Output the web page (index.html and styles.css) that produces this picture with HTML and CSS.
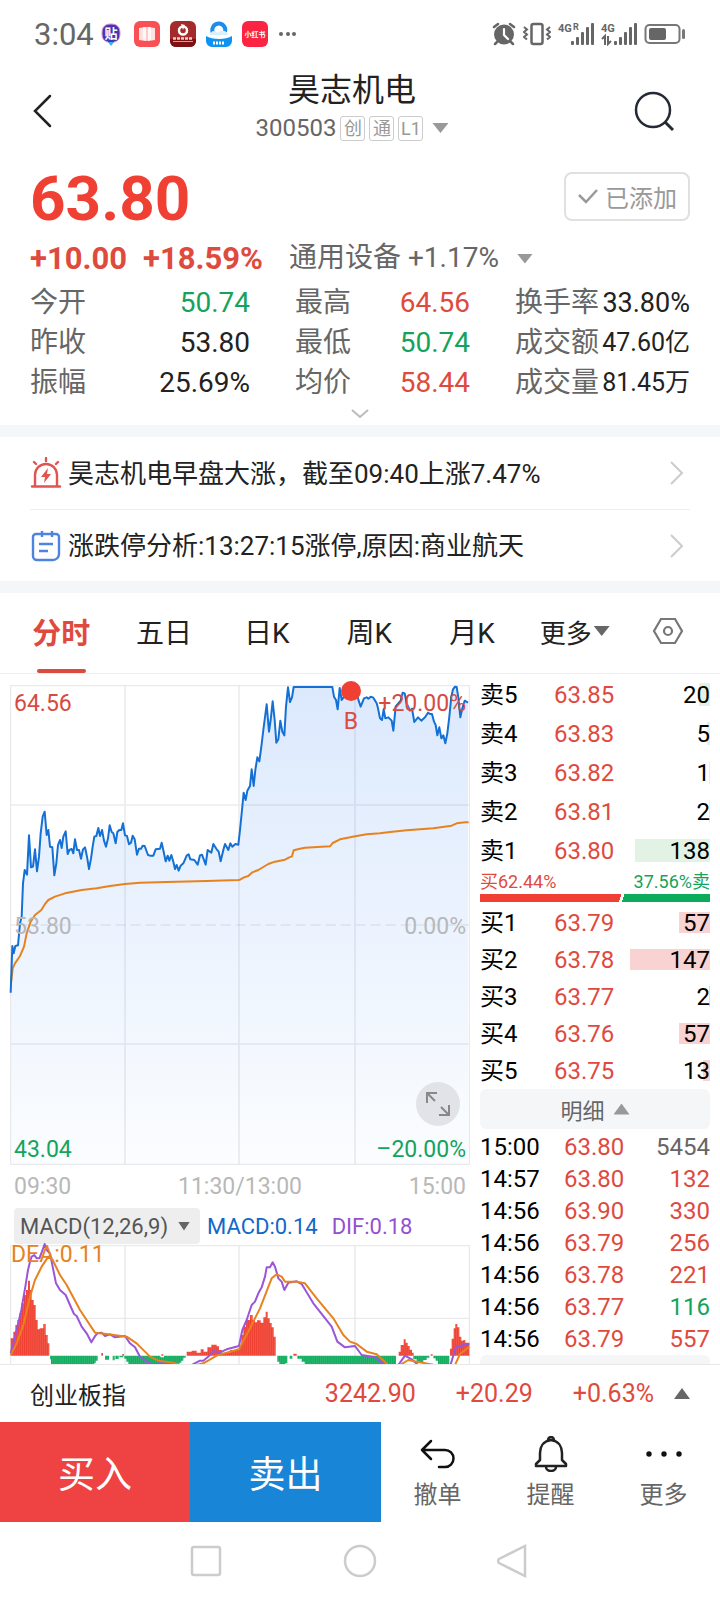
FILE: index.html
```html
<!DOCTYPE html>
<html lang="zh-CN">
<head>
    <meta charset="UTF-8">
    <meta name="viewport" content="width=device-width, initial-scale=1.0">
    <title>昊志机电 300503</title>
    <link rel="stylesheet" href="styles.css">
</head>
<body>
    <div class="status-bar">
        <span class="clock">3:04</span>
        <div class="app-icons">
            <svg width="26" height="26" viewBox="0 0 26 26">
                <path d="M13 3c6 0 9 3 9 9s-2 8-6 9l-3 3-3-3c-4-1-6-3-6-9s3-9 9-9z" fill="#4338b0" stroke="#e58bc8" stroke-width="1"/>
                <path d="M10 21l3 4 3-4z" fill="#35b5f5"/>
                <text x="13" y="17" class="icon-text" font-size="13">贴</text>
            </svg>
            <svg width="26" height="26" viewBox="0 0 26 26">
                <rect width="26" height="26" rx="6" fill="#f94f55"/>
                <path d="M5 7l7-1v14l-7-1zM14 6l7 1v12l-7 1z" fill="#fde3df"/>
                <path d="M9 6h8v13l-4 1-4-1z" fill="#fff" opacity=".7"/>
            </svg>
            <svg width="26" height="26" viewBox="0 0 26 26">
                <rect width="26" height="26" rx="6" fill="#a52a2a"/>
                <path d="M0 18h26v2a6 6 0 0 1-6 6H6a6 6 0 0 1-6-6z" fill="#7c1013"/>
                <circle cx="13" cy="9.500" r="4" fill="none" stroke="#fff" stroke-width="2.500"/>
                <path d="M11 3l4 1-2 5z" fill="#fff"/>
                <path d="M3 17.500h20" stroke="#f1caca" stroke-width="2.500" stroke-dasharray="3 1"/>
                <path d="M3 20.500h20" stroke="#d79a9a"/>
            </svg>
            <svg width="26" height="26" viewBox="0 0 26 26">
                <path d="M7 12a6.500 6.500 0 1 1 12-1" fill="none" stroke="#1c8cf0" stroke-width="4"/>
                <path d="M4 14c1-5 5-5 8-2 3-4 10-2 10 2z" fill="#d9effc"/>
                <path d="M0 15c6 4 20 4 26 0v5a6 6 0 0 1-6 6H6a6 6 0 0 1-6-6z" fill="#1093f0"/>
                <path d="M7 22h12" stroke="#fff" stroke-width="3" stroke-dasharray="2 1"/>
            </svg>
            <svg width="26" height="26" viewBox="0 0 26 26">
                <rect width="26" height="26" rx="6" fill="#fc2442"/>
                <text x="13" y="16" class="icon-text" font-size="7">小红书</text>
            </svg>
            <svg width="20" height="26" viewBox="0 0 20 26" fill="#666">
                <circle cx="3" cy="13" r="2"/><circle cx="10" cy="13" r="2"/><circle cx="16" cy="13" r="2"/>
            </svg>
        </div>
        <div class="system-icons">
            <svg width="24" height="24" viewBox="0 0 24 24">
                <circle cx="12" cy="12.500" r="10" fill="#666"/>
                <path d="M2 5l4-3M22 5l-4-3M5 20l-2 2M19 20l2 2" stroke="#666" stroke-width="2.500" stroke-linecap="round"/>
                <path d="M12 7v6l4 4" fill="none" stroke="#fff" stroke-width="2.200" stroke-linecap="round"/>
            </svg>
            <svg width="28" height="24" viewBox="0 0 28 24" fill="none" stroke="#666">
                <rect x="8.500" y="2" width="11" height="20" rx="2" stroke-width="2.500"/>
                <path d="M1 5l3 2.500-3 2.500 3 2.500-3 2.500 3 2.500M27 5l-3 2.500 3 2.500-3 2.500 3 2.500-3 2.500" stroke-width="2"/>
            </svg>
            <svg width="36" height="24" viewBox="0 0 36 24" fill="#666">
                <text x="0" y="10" class="net-text">4G</text><text x="15" y="8" class="net-text net-r">R</text>
                <rect x="13" y="19" width="3" height="4" rx="1"/><rect x="18" y="15" width="3" height="8" rx="1"/>
                <rect x="23" y="10" width="3" height="13" rx="1"/><rect x="28" y="5" width="3" height="18" rx="1"/>
                <rect x="33" y="1" width="3" height="22" rx="1"/>
            </svg>
            <svg width="36" height="24" viewBox="0 0 36 24" fill="#666">
                <text x="0" y="10" class="net-text">4G</text>
                <path d="M1 17l3-3v9M7 14v8l3-3" fill="none" stroke="#666" stroke-width="2"/>
                <rect x="13" y="19" width="3" height="4" rx="1"/><rect x="18" y="15" width="3" height="8" rx="1"/>
                <rect x="23" y="10" width="3" height="13" rx="1"/><rect x="28" y="5" width="3" height="18" rx="1"/>
                <rect x="33" y="1" width="3" height="22" rx="1"/>
            </svg>
            <svg width="42" height="24" viewBox="0 0 42 24">
                <rect x="1.500" y="3" width="34" height="18" rx="4" fill="none" stroke="#777" stroke-width="2"/>
                <rect x="5" y="6" width="17" height="12" rx="2" fill="#666"/>
                <rect x="38" y="7" width="3" height="10" rx="1.500" fill="#777"/>
            </svg>
        </div>
    </div>

    <header class="title-bar">
        <button class="icon-btn back" aria-label="返回">
            <svg width="22" height="34" viewBox="0 0 22 34"><path d="M20 2L5 17l15 15" fill="none" stroke="#222" stroke-width="2.500" stroke-linecap="round"/></svg>
        </button>
        <div class="stock-title">
            <h1>昊志机电</h1>
            <div class="stock-code">
                <span>300503</span>
                <span class="tag">创</span>
                <span class="tag">通</span>
                <span class="tag">L1</span>
                <i class="tri-down"></i>
            </div>
        </div>
        <button class="icon-btn search" aria-label="搜索">
            <svg width="42" height="42" viewBox="0 0 42 42" fill="none" stroke="#252a35" stroke-width="2.500"><circle cx="19" cy="20" r="17"/><path d="M31 32l8 8" stroke-width="3"/></svg>
        </button>
    </header>

    <section class="quote">
        <div class="price-row">
            <strong class="price">63.80</strong>
            <button class="added">
                <svg width="22" height="18" viewBox="0 0 22 18"><path d="M2 8l7 7L20 3" fill="none" stroke="#999" stroke-width="2.500"/></svg>
                已添加
            </button>
        </div>
        <div class="change-row">
            <strong>+10.00</strong>
            <strong>+18.59%</strong>
            <span class="sector">通用设备 +1.17%</span>
            <i class="tri-down"></i>
        </div>
        <div class="stats">
            <dl>
                <div><dt>今开</dt><dd class="green">50.74</dd></div>
                <div><dt>昨收</dt><dd>53.80</dd></div>
                <div><dt>振幅</dt><dd>25.69%</dd></div>
            </dl>
            <dl>
                <div><dt>最高</dt><dd class="red">64.56</dd></div>
                <div><dt>最低</dt><dd class="green">50.74</dd></div>
                <div><dt>均价</dt><dd class="red">58.44</dd></div>
            </dl>
            <dl>
                <div><dt>换手率</dt><dd class="wide">33.80%</dd></div>
                <div><dt>成交额</dt><dd class="amount">47.60亿</dd></div>
                <div><dt>成交量</dt><dd class="amount">81.45万</dd></div>
            </dl>
        </div>
        <button class="icon-btn expand" aria-label="展开">
            <svg width="20" height="10" viewBox="0 0 20 10"><path d="M2 1l8 7 8-7" fill="none" stroke="#bbb" stroke-width="2"/></svg>
        </button>
    </section>

    <section class="alerts">
        <a href="#">
            <svg width="32" height="32" viewBox="0 0 32 32" fill="none" stroke="#e2544f" stroke-width="2.400" stroke-linecap="round">
                <path d="M2 29.500h28M5 29V18a11 11 0 0 1 22 0v11M16 1v3M4 5l2 2M28 5l-2 2"/>
                <path d="M18 11l-7 9h4l-1 6 7-9h-4z" fill="#e2544f" stroke="none"/>
            </svg>
            <span>昊志机电早盘大涨，截至09:40上涨7.47%</span>
            <svg class="arrow" width="14" height="26" viewBox="0 0 14 26"><path d="M1 2l11 11L1 24" fill="none" stroke="#ccc" stroke-width="2"/></svg>
        </a>
        <a href="#">
            <svg width="32" height="32" viewBox="0 0 32 32" fill="none" stroke="#4f83e0" stroke-width="2.400">
                <path d="M6 4h20a3 3 0 0 1 3 3v17a6 6 0 0 1-6 6H7a4 4 0 0 1-4-4V7a3 3 0 0 1 3-3zM12 1v6M22 1v6M9 14h14M9 21h9"/>
            </svg>
            <span>涨跌停分析:13:27:15涨停,原因:商业航天</span>
            <svg class="arrow" width="14" height="26" viewBox="0 0 14 26"><path d="M1 2l11 11L1 24" fill="none" stroke="#ccc" stroke-width="2"/></svg>
        </a>
    </section>

    <nav class="tabs">
        <button class="active">分时</button>
        <button>五日</button>
        <button>日K</button>
        <button>周K</button>
        <button>月K</button>
        <button class="more">更多<i class="tri-down dark"></i></button>
        <button class="settings" aria-label="设置">
            <svg width="32" height="28" viewBox="0 0 32 28" fill="none" stroke="#777" stroke-width="2.200"><path d="M9 2h14l7 12-7 12H9L2 14z"/><circle cx="16" cy="14" r="4"/></svg>
        </button>
    </nav>

    <main class="market">
        <div class="charts">
            <div class="time-chart">
                <svg viewBox="30 45 1380 1440" preserveAspectRatio="none">
                    <defs>
                        <linearGradient id="area" x1="0" y1="0" x2="0" y2="1">
                            <stop offset="0" stop-color="#dce9fd"/>
                            <stop offset="1" stop-color="#fbfdff"/>
                        </linearGradient>
                    </defs>
                    <path fill="url(#area)" d="M32 968L37 828 41 850 46 828 54 826 60 760 65 740 69 640 74 600 81 614 87 496 93 592 99 590 105 538 111 604 117 560 122 490 128 440 134 425 140 495 145 480 150 530 157 532 163 616 169 580 174 525 180 510 185 534 190 500 197 484 203 552 208 540 215 537 220 550 225 508 231 540 237 540 243 566 249 538 255 532 261 560 267 597 273 566 278 530 283 500 289 498 295 474 300 498 306 480 312 512 318 530 324 505 329 466 335 486 340 490 347 520 352 486 358 480 364 480 369 460 375 496 381 498 387 523 393 518 398 497 404 508 411 554 417 536 423 536 428 527 434 528 444 555 450 557 460 557 467 538 480 536 485 518 491 545 497 574 503 557 508 572 514 555 520 575 525 597 530 585 536 602 542 587 550 580 560 557 566 553 571 568 583 570 593 584 600 556 606 554 617 584 623 540 634 548 640 522 650 538 656 545 662 574 670 540 675 522 685 540 691 520 697 530 706 522 715 524 720 480 726 420 731 368 737 390 742 362 750 348 755 298 761 348 766 300 772 262 778 274 784 230 790 180 800 103 807 185 812 150 818 94 824 150 829 218 835 208 841 152 847 185 853 196 858 110 864 52 870 96 876 82 881 51 997 51 1002 80 1008 90 1013 118 1019 54 1025 90 1031 82 1035 60 1070 70 1076 92 1082 110 1092 85 1100 82 1105 86 1112 80 1120 83 1130 100 1134 115 1140 145 1146 150 1151 118 1156 145 1165 142 1175 152 1180 182 1187 110 1195 100 1202 92 1208 68 1214 70 1220 100 1230 122 1236 116 1243 156 1254 142 1264 152 1275 142 1284 128 1290 132 1296 132 1302 155 1307 165 1312 196 1318 172 1324 205 1330 196 1336 220 1342 190 1348 140 1354 80 1359 58 1365 50 1370 51 1376 90 1381 142 1387 115 1394 92 1404 98V1483H32z"/>
                    <g class="grid">
                        <path d="M375 46V1483M717 46V1483M1065 46V1483M32 405H1408M32 1122H1408"/>
                        <path class="zero" d="M32 765H1408"/>
                        <path class="frame" d="M32 47H1408V1483H32z"/>
                    </g>
                    <polyline class="avg" points="33,940 38,895 45,880 60,858 72,830 80,790 92,755 105,735 124,720 135,702 145,690 165,680 195,670 245,660 290,655 330,648 375,642 420,638 500,636 620,633 715,630 720,629 732,622 745,618 757,607 775,600 790,591 805,582 825,575 855,569 868,562 876,559 881,541 900,536 915,533 990,529 998,519 1020,508 1070,498 1100,493 1140,490 1170,486 1220,481 1300,475 1355,467 1370,460 1395,457 1406,457"/>
                    <polyline class="last" points="32,968 37,828 41,850 46,828 54,826 60,760 65,740 69,640 74,600 81,614 87,496 93,592 99,590 105,538 111,604 117,560 122,490 128,440 134,425 140,495 145,480 150,530 157,532 163,616 169,580 174,525 180,510 185,534 190,500 197,484 203,552 208,540 215,537 220,550 225,508 231,540 237,540 243,566 249,538 255,532 261,560 267,597 273,566 278,530 283,500 289,498 295,474 300,498 306,480 312,512 318,530 324,505 329,466 335,486 340,490 347,520 352,486 358,480 364,480 369,460 375,496 381,498 387,523 393,518 398,497 404,508 411,554 417,536 423,536 428,527 434,528 444,555 450,557 460,557 467,538 480,536 485,518 491,545 497,574 503,557 508,572 514,555 520,575 525,597 530,585 536,602 542,587 550,580 560,557 566,553 571,568 583,570 593,584 600,556 606,554 617,584 623,540 634,548 640,522 650,538 656,545 662,574 670,540 675,522 685,540 691,520 697,530 706,522 715,524 720,480 726,420 731,368 737,390 742,362 750,348 755,298 761,348 766,300 772,262 778,274 784,230 790,180 800,103 807,185 812,150 818,94 824,150 829,218 835,208 841,152 847,185 853,196 858,110 864,52 870,96 876,82 881,51 997,51 1002,80 1008,90 1013,118 1019,54 1025,90 1031,82 1035,60 1070,70 1076,92 1082,110 1092,85 1100,82 1105,86 1112,80 1120,83 1130,100 1134,115 1140,145 1146,150 1151,118 1156,145 1165,142 1175,152 1180,182 1187,110 1195,100 1202,92 1208,68 1214,70 1220,100 1230,122 1236,116 1243,156 1254,142 1264,152 1275,142 1284,128 1290,132 1296,132 1302,155 1307,165 1312,196 1318,172 1324,205 1330,196 1336,220 1342,190 1348,140 1354,80 1359,58 1365,50 1370,51 1376,90 1381,142 1387,115 1394,92 1404,98"/>
                </svg>
                <span class="mark top left red">64.56</span>
                <span class="mark top right red">+20.00%</span>
                <span class="mark mid left">53.80</span>
                <span class="mark mid right">0.00%</span>
                <span class="mark bottom left green">43.04</span>
                <span class="mark bottom right green">–20.00%</span>
                <span class="trade-point"><i></i>B</span>
                <button class="fullscreen" aria-label="全屏">
                    <svg width="26" height="26" viewBox="0 0 26 26" fill="none" stroke="#888" stroke-width="2"><path d="M2 12V2h10M2 2l8 8M24 14v10H14M24 24l-8-8"/></svg>
                </button>
            </div>
            <div class="time-axis"><span>09:30</span><span>11:30/13:00</span><span>15:00</span></div>
            <div class="indicator-row">
                <span class="indicator">
                    <select aria-label="指标"><option>MACD(12,26,9)</option></select>
                    <i class="tri-down dark small"></i>
                </span>
                <span class="blue">MACD:0.14</span>
                <span class="purple">DIF:0.18</span>
            </div>
            <div class="macd-chart">
                <svg viewBox="30 465 1380 360" preserveAspectRatio="none">
                    <defs>
                        <pattern id="rise" width="5.750" height="10" patternUnits="userSpaceOnUse"><rect width="6" height="10" fill="#ef3f30"/><rect width="1.200" height="10" fill="#f67a6c"/></pattern>
                        <pattern id="fall" width="5.750" height="10" patternUnits="userSpaceOnUse"><rect width="6" height="10" fill="#0cab5c"/><rect width="1.200" height="10" fill="#5cc894"/></pattern>
                    </defs>
                    <g class="grid">
                        <path d="M375 467V825M717 467V825M1065 467V825"/>
                        <path class="frame" d="M32 825V467H1408V825M32 685H1408"/>
                    </g>
                    <path fill="url(#rise)" d="M32 797V745H40V725H46V705H52V690H58V670H64V640H72V615H78V600H84V572H90V600H95V630H101V645H107V690H113V718H119V715H130V702H137V735H143V760H148V797z
                        M304 797v-8h5v8zM367 797v-5h5v5zM484 797v-4h6v4z
                        M560 797V785H575V782H590V788H602V778H611V785H622V772H634V764H650V769H657V780H665V788H690V780H717V765H724V735H730V710H738V690H750V675H758V690H765V697H771V691H782V698H790V682H797V665H803V685H809V699H815V712H821V740H827V797z
                        M880 797v-6h10v6zM1196 797V785H1202V765H1211V748H1217V758H1223V768H1229V779H1236V788H1241V797zM1292 797v-4h6v4z
                        M1350 797V776H1355V746H1361V715H1366V702H1372V712H1378V740H1384V752H1390V750H1396V758H1408V797z"/>
                    <path fill="url(#fall)" d="M150 797H293V812H287V820H282V825H153V808H150z
                        M315 797h12v12h-12zM338 797h6v14h-6zM346 797h10v10h-10zM358 797h12v5h-12z
                        M373 797H481V802H492V797H557V803H550V812H544V818H538V825H385V815H379V806H373z
                        M832 797H862V820H856V825H838V815H832zM869 797h8v9h-8zM892 797H1188V825H914V815H905V806H892z
                        M1240 797H1288V803H1280V810H1270V818H1250V808H1240zM1300 797H1348V823H1314V812H1307V805H1300z"/>
                    <polyline class="dif" points="32,790 50,720 64,660 76,590 84,540 90,515 95,500 103,495 110,505 118,505 126,485 134,462 140,480 150,490 158,530 168,580 180,600 197,615 210,645 222,672 230,678 245,710 260,730 274,757 284,740 292,730 305,728 315,738 330,733 345,742 375,738 390,760 405,772 420,800 440,815 462,825 480,819 500,821 540,832 575,825 600,812 610,812 628,797 640,783 660,787 680,778 717,768 727,720 740,690 755,645 765,635 775,610 785,592 795,560 800,532 810,532 818,517 825,530 835,565 845,575 853,600 865,578 890,574 905,582 940,640 995,710 1012,755 1035,772 1065,768 1085,795 1125,802 1160,830 1195,825 1215,797 1235,808 1260,830 1350,830 1362,790 1370,768 1380,770 1390,765 1408,762"/>
                    <polyline class="dea" points="32,795 50,760 70,705 90,620 105,570 125,530 145,500 158,510 180,555 200,585 240,660 285,728 320,732 380,740 410,760 450,800 475,812 520,818 560,832 610,820 650,797 690,785 717,778 750,715 780,655 815,565 830,553 845,560 855,575 890,575 915,580 950,625 1000,685 1030,735 1050,755 1070,762 1100,785 1130,793 1170,830 1200,825 1225,810 1250,815 1300,824 1365,825 1380,792 1408,770"/>
                </svg>
                <span class="dea-label">DEA:0.11</span>
            </div>
        </div>

        <div class="order-book">
            <table class="sell">
                <tr><td>卖5</td><td>63.85</td><td style="--w: 11px">20</td></tr>
                <tr><td>卖4</td><td>63.83</td><td style="--w: 3px">5</td></tr>
                <tr><td>卖3</td><td>63.82</td><td style="--w: 1px">1</td></tr>
                <tr><td>卖2</td><td>63.81</td><td style="--w: 1px">2</td></tr>
                <tr><td>卖1</td><td>63.80</td><td style="--w: 75px">138</td></tr>
            </table>
            <div class="ratio-text"><span class="red">买62.44%</span><span class="green">37.56%卖</span></div>
            <div class="ratio-bar"><i style="width: 62.44%"></i></div>
            <table class="buy">
                <tr><td>买1</td><td>63.79</td><td style="--w: 31px">57</td></tr>
                <tr><td>买2</td><td>63.78</td><td style="--w: 80px">147</td></tr>
                <tr><td>买3</td><td>63.77</td><td style="--w: 1px">2</td></tr>
                <tr><td>买4</td><td>63.76</td><td style="--w: 31px">57</td></tr>
                <tr><td>买5</td><td>63.75</td><td style="--w: 7px">13</td></tr>
            </table>
            <button class="detail-btn">明细<i class="tri-up light"></i></button>
            <table class="ticks">
                <tr><td>15:00</td><td>63.80</td><td class="gray">5454</td></tr>
                <tr><td>14:57</td><td>63.80</td><td class="red">132</td></tr>
                <tr><td>14:56</td><td>63.90</td><td class="red">330</td></tr>
                <tr><td>14:56</td><td>63.79</td><td class="red">256</td></tr>
                <tr><td>14:56</td><td>63.78</td><td class="red">221</td></tr>
                <tr><td>14:56</td><td>63.77</td><td class="green">116</td></tr>
                <tr><td>14:56</td><td>63.79</td><td class="red">557</td></tr>
            </table>
            <div class="next-panel"></div>
        </div>
    </main>

    <footer>
        <div class="index-row">
            <span class="index-name">创业板指</span>
            <span>3242.90</span>
            <span>+20.29</span>
            <span>+0.63%</span>
            <i class="tri-up"></i>
        </div>
        <div class="actions">
            <button class="trade buy-btn">买入</button>
            <button class="trade sell-btn">卖出</button>
            <div class="tools">
                <button>
                    <svg width="36" height="36" viewBox="0 0 36 36" fill="none" stroke="#111" stroke-width="2.500" stroke-linecap="round" stroke-linejoin="round"><path d="M11 5l-9 9 9 9M2 14h23a8 8 0 0 1 0 17h-6"/></svg>
                    撤单
                </button>
                <button>
                    <svg width="36" height="36" viewBox="0 0 36 36" fill="none" stroke="#222" stroke-width="2.500" stroke-linejoin="round"><path d="M18 4C10 5 7 11 7 17v7l-4 4v2h30v-2l-4-4v-7c0-6-3-12-11-13zM15 4a3 3 0 0 1 6 0M13 31a5 4 0 0 0 10 0"/></svg>
                    提醒
                </button>
                <button>
                    <svg width="38" height="36" viewBox="0 0 38 36" fill="#111"><circle cx="4" cy="18" r="2.700"/><circle cx="19" cy="18" r="2.700"/><circle cx="34" cy="18" r="2.700"/></svg>
                    更多
                </button>
            </div>
        </div>
        <div class="system-nav">
            <svg width="34" height="34" viewBox="0 0 34 34"><rect x="3" y="3" width="28" height="28" rx="2"/></svg>
            <svg width="34" height="34" viewBox="0 0 34 34"><circle cx="17" cy="17" r="15"/></svg>
            <svg width="34" height="34" viewBox="0 0 34 34"><path d="M28 2v30L2 19q-2-2 0-4z"/></svg>
        </div>
    </footer>
</body>
</html>
```
FILE: styles.css
```css
* {
    box-sizing: border-box;
}

body {
    margin: 0;
    height: 100vh;
    display: flex;
    flex-direction: column;
    background-color: #fff;
    color: #222;
    font-family: Roboto, "Noto Sans CJK SC", sans-serif;
    font-size: 24px;
}

button {
    margin: 0;
    padding: 0;
    border: none;
    background: none;
    color: inherit;
    font: inherit;
    cursor: pointer;
}

svg {
    display: block;
    flex-shrink: 0;
}

.red { color: #df4a3e; }
.green { color: #15a35c; }
.gray { color: #666; }
.blue { color: #1268c8; }
.purple { color: #9550d0; }

.tri-down,
.tri-up {
    width: 16px;
    height: 10px;
    background-color: #999;
    clip-path: polygon(0 0, 100% 0, 50% 100%);
}

.tri-up {
    height: 11px;
    background-color: #666;
    clip-path: polygon(50% 0, 100% 100%, 0 100%);
}

.tri-down.dark { background-color: #666; }
.tri-up.light { background-color: #999; }
.tri-down.small { width: 12px; height: 9px; }

/* status bar */
.status-bar {
    height: 68px;
    padding: 0 34px;
    display: flex;
    align-items: center;
    flex-shrink: 0;
}

.clock {
    font-size: 31px;
    color: #666;
    margin-right: 4px;
}

.app-icons {
    display: flex;
    gap: 10px;
    flex: 1;
}

.icon-text {
    fill: #fff;
    font-weight: bold;
    text-anchor: middle;
}

.system-icons {
    display: flex;
    gap: 7px;
}

.net-text {
    font-size: 11px;
    font-weight: bold;
}

.net-r {
    font-size: 9px;
}

/* title */
.title-bar {
    height: 86px;
    padding: 0 30px;
    display: grid;
    grid-template-columns: 44px 1fr 60px;
    flex-shrink: 0;
}

.search {
    justify-self: end;
    padding-right: 14px;
}

.stock-title {
    text-align: center;
}

h1 {
    margin: 0;
    font-size: 32px;
    font-weight: 400;
    line-height: 44px;
}

.stock-code {
    display: flex;
    align-items: center;
    justify-content: center;
    gap: 4px;
    height: 32px;
    color: #666;
}

.tag {
    min-width: 25px;
    height: 25px;
    border: 1px solid #ccc;
    border-radius: 3px;
    color: #999;
    font-size: 18px;
    line-height: 23px;
}

.stock-code .tri-down {
    margin-left: 5px;
}

/* quote */
.quote {
    padding: 8px 30px 0;
    border-bottom: 12px solid #f5f6f8;
    flex-shrink: 0;
}

.price-row {
    height: 72px;
    display: flex;
    align-items: center;
    justify-content: space-between;
}

.price {
    color: #ef4033;
    font-size: 62px;
}

.added {
    height: 49px;
    margin-bottom: 4px;
    padding: 0 11px;
    display: flex;
    align-items: center;
    gap: 6px;
    border: 2px solid #e0e0e0;
    border-radius: 8px;
    color: #999;
}

.change-row {
    height: 49px;
    display: flex;
    align-items: center;
    color: #df4a3e;
    font-size: 31px;
}

.change-row strong {
    margin-right: 16px;
}

.sector {
    margin: 0 18px 0 10px;
    color: #666;
    font-size: 28px;
    line-height: 36px;
    padding-bottom: 2px;
}

.stats {
    display: grid;
    grid-template-columns: 220fr 175fr 175fr;
    gap: 45px;
    font-size: 28px;
}

dl {
    margin: 0;
}

dl div {
    display: flex;
    justify-content: space-between;
    line-height: 40px;
    white-space: nowrap;
}

dt {
    color: #666;
}

dd {
    margin: 0;
}

.wide {
    font-size: 27px;
}

.amount {
    font-size: 25px;
}

.expand {
    display: block;
    height: 22px;
    margin: 0 auto;
}

/* alerts */
.alerts {
    padding: 0 30px;
    border-bottom: 12px solid #f5f6f8;
    flex-shrink: 0;
}

.alerts a {
    height: 72px;
    display: flex;
    align-items: center;
    gap: 6px;
    color: #222;
    font-size: 26px;
    text-decoration: none;
}

.alerts span {
    padding-bottom: 4px;
}

.alerts a + a {
    border-top: 1px solid #eee;
}

.arrow {
    margin-left: auto;
    margin-right: 6px;
}

/* tabs */
.tabs {
    height: 81px;
    padding: 0 36px 0 10px;
    display: flex;
    border-bottom: 1px solid #eee;
    font-size: 28px;
    flex-shrink: 0;
}

.tabs button {
    flex: 1;
    position: relative;
    padding-bottom: 4px;
}

.tabs .active {
    color: #df4a3e;
    font-size: 29px;
    font-weight: bold;
}

.tabs .active::after {
    content: "";
    position: absolute;
    left: 50%;
    bottom: 0;
    width: 49px;
    height: 4px;
    margin-left: -24px;
    border-radius: 2px;
    background-color: #d94a3f;
}

.tabs .more {
    display: flex;
    align-items: center;
    justify-content: center;
    gap: 2px;
    font-size: 26px;
}

.tabs .settings {
    flex: 0 0 58px;
    display: flex;
    align-items: center;
    justify-content: flex-end;
}

/* charts and order book */
.market {
    flex: 1;
    min-height: 0;
    overflow: hidden;
    padding: 0 10px;
    display: grid;
    grid-template-columns: 1fr 230px;
    grid-template-rows: max-content;
    gap: 10px;
}

.charts {
    padding-top: 11px;
    font-size: 23px;
}

.time-chart,
.macd-chart {
    position: relative;
}

.time-chart svg,
.macd-chart svg {
    width: 100%;
    height: 480px;
    overflow: visible;
}

.time-chart .fullscreen svg {
    width: 26px;
    height: 26px;
    margin: 0 auto;
}

.macd-chart svg {
    height: 120px;
}

.grid path {
    fill: none;
    stroke: rgba(120, 130, 150, 0.15);
    stroke-width: 5;
}

.grid .frame {
    stroke: #e4e5e8;
    stroke-width: 3;
}

.grid .zero {
    stroke-dasharray: 30 15;
}

.last,
.avg,
.dif,
.dea {
    fill: none;
    stroke-width: 6;
    stroke-linejoin: round;
}

.last { stroke: #1470d4; }
.avg, .dea { stroke: #e8821e; }
.dif { stroke: #9b55d8; }

.mark {
    position: absolute;
    line-height: 28px;
    color: #b8b8b8;
}

.mark.red { color: #d64b41; }
.mark.green { color: #15a35c; }
.top { top: 5px; }
.mid { top: 228px; }
.bottom { bottom: 1px; }
.left { left: 4px; }
.right { right: 4px; }

.trade-point {
    position: absolute;
    top: -4px;
    left: 331px;
    width: 20px;
    text-align: center;
    color: #df4a3e;
    line-height: 42px;
}

.trade-point i {
    display: block;
    height: 20px;
    border-radius: 50%;
    background-color: #ef4033;
}

.fullscreen {
    position: absolute;
    right: 10px;
    bottom: 39px;
    width: 44px;
    height: 44px;
    border-radius: 50%;
    background-color: rgba(210, 212, 216, 0.6);
}

.time-axis {
    height: 42px;
    padding: 0 4px;
    display: flex;
    align-items: center;
    justify-content: space-between;
    color: #b8b8b8;
}

.indicator-row {
    height: 38px;
    padding-left: 4px;
    display: flex;
    align-items: center;
    gap: 7px;
    font-size: 22px;
    white-space: nowrap;
}

.indicator {
    height: 36px;
    padding: 0 10px 0 6px;
    display: flex;
    align-items: center;
    gap: 9px;
    border-radius: 4px;
    background-color: #eee;
}

.indicator select {
    appearance: none;
    padding: 0;
    border: none;
    background: none;
    color: #555;
    font: inherit;
}

.indicator-row .purple {
    margin-left: 7px;
}

.dea-label {
    position: absolute;
    top: -4px;
    left: 1px;
    line-height: 28px;
    color: #e8821e;
}

.order-book {
    padding-top: 1px;
    color: #000;
}

table {
    width: 100%;
    border-collapse: collapse;
    table-layout: fixed;
}

td {
    padding: 0;
}

td:first-child {
    width: 74px;
}

td:nth-child(2) {
    width: 76px;
    color: #df4a3e;
}

td:last-child {
    text-align: right;
}

.sell tr { height: 39px; }
.buy tr { height: 37px; }
.ticks tr { height: 32px; }

.sell td,
.buy td,
.ticks td {
    line-height: 28px;
}

.sell td:last-child,
.buy td:last-child {
    background: linear-gradient(#e2f2e4, #e2f2e4) right center / var(--w) 23px no-repeat;
}

.buy td:last-child {
    background: linear-gradient(#f9d2d2, #f9d2d2) right center / var(--w) 21px no-repeat;
}

.ratio-text {
    display: flex;
    justify-content: space-between;
    font-size: 18px;
    line-height: 24px;
}

.ratio-bar {
    height: 8px;
    margin-bottom: 2px;
    background-color: #0cab5c;
}

.ratio-bar i {
    display: block;
    height: 8px;
    background: linear-gradient(108deg, #ef4033 0 calc(100% - 5px), #fff calc(100% - 5px) calc(100% - 2px), #0cab5c calc(100% - 2px));
}

.detail-btn {
    width: 100%;
    height: 40px;
    margin-bottom: 2px;
    display: flex;
    align-items: center;
    justify-content: center;
    gap: 9px;
    border-radius: 6px;
    background-color: #f5f6f8;
    color: #666;
    font-size: 22px;
}

.ticks td:first-child {
    width: 84px;
}

.ticks td.gray { color: #666; }

.next-panel {
    height: 40px;
    border-radius: 6px;
    background-color: #f5f6f8;
}

/* bottom */
footer {
    flex-shrink: 0;
}

.index-row {
    height: 58px;
    padding: 0 30px;
    display: flex;
    align-items: center;
    border-top: 1px solid #e8e8e8;
    color: #df4a3e;
    font-size: 25px;
}

.index-name {
    flex: 1;
    color: #222;
    font-size: 24px;
}

.index-row span + span {
    margin-left: 40px;
}

.index-row .tri-up {
    margin-left: 20px;
}

.actions {
    height: 100px;
    display: grid;
    grid-template-columns: 190fr 191fr 339fr;
}

.trade {
    color: #fff;
    font-size: 37px;
}

.buy-btn { background-color: #ef4242; }
.sell-btn { background-color: #1885d6; }

.tools {
    display: flex;
}

.tools button {
    flex: 1;
    display: flex;
    flex-direction: column;
    align-items: center;
    justify-content: center;
    gap: 7px;
    padding-top: 2px;
    color: #666;
    line-height: 32px;
}

.system-nav {
    height: 78px;
    padding: 0 189px;
    display: flex;
    align-items: center;
    justify-content: space-between;
}

.system-nav svg {
    fill: none;
    stroke: #ccc;
    stroke-width: 2.5;
}
```
